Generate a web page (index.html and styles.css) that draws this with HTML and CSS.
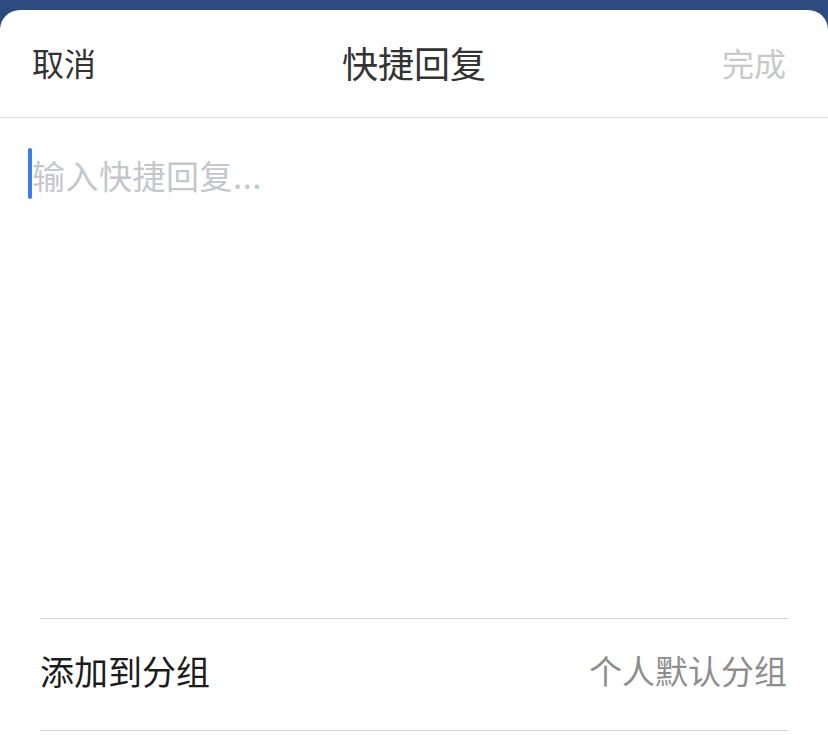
FILE: index.html
```html
<!DOCTYPE html>
<html lang="zh-CN">
<head>
<meta charset="utf-8">
<title>快捷回复</title>
<link rel="stylesheet" href="styles.css">
</head>
<body>
<div class="sheet">
  <header class="nav">
    <span class="nav-btn cancel">取消</span>
    <span class="nav-title">快捷回复</span>
    <span class="nav-btn done">完成</span>
  </header>
  <main class="editor">
    <div class="input-line">
      <span class="caret"></span>
      <span class="placeholder">输入快捷回复...</span>
    </div>
  </main>
  <section class="group-row">
    <span class="row-label">添加到分组</span>
    <span class="row-value">个人默认分组</span>
  </section>
</div>
</body>
</html>
```

FILE: styles.css
```css
html, body {
  margin: 0;
  padding: 0;
  height: 100%;
}
body {
  background: #2d4b80;
  font-family: "Noto Sans CJK SC", "Noto Sans", sans-serif;
  overflow: hidden;
}
.sheet {
  margin-top: 10px;
  height: 725px;
  background: #ffffff;
  border-radius: 20px 20px 0 0;
  display: flex;
  flex-direction: column;
}
.nav {
  box-sizing: border-box;
  height: 108px;
  border-bottom: 1px solid #d9d9d9;
  display: flex;
  align-items: center;
  justify-content: space-between;
  padding: 0 42px 4px 32px;
  position: relative;
}
.nav-btn {
  font-size: 32px;
  line-height: 1;
}
.cancel {
  color: #333333;
}
.done {
  color: #c9c9c9;
}
.nav-title {
  font-size: 36px;
  color: #333333;
  line-height: 1;
  position: absolute;
  left: 0;
  right: 0;
  text-align: center;
  top: 34px;
  pointer-events: none;
}
.editor {
  flex: 1;
  padding: 30px 0 0 28px;
}
.input-line {
  display: flex;
  align-items: center;
  height: 51px;
}
.caret {
  width: 4px;
  height: 51px;
  background: #3b7ef0;
  border-radius: 2px;
}
.placeholder {
  font-size: 33px;
  color: #c5c7cd;
  line-height: 1;
  letter-spacing: 0.5px;
  margin-top: 4px;
}
.group-row {
  box-sizing: border-box;
  margin: 0 40px 4px 40px;
  height: 113px;
  padding-bottom: 8px;
  border-top: 1px solid #d6d6d6;
  border-bottom: 1px solid #d6d6d6;
  display: flex;
  align-items: center;
  justify-content: space-between;
}
.row-label {
  font-size: 34px;
  color: #1c1c1c;
  line-height: 1;
}
.row-value {
  font-size: 33px;
  color: #8e8e8e;
  line-height: 1;
  margin-right: 1px;
}
```
